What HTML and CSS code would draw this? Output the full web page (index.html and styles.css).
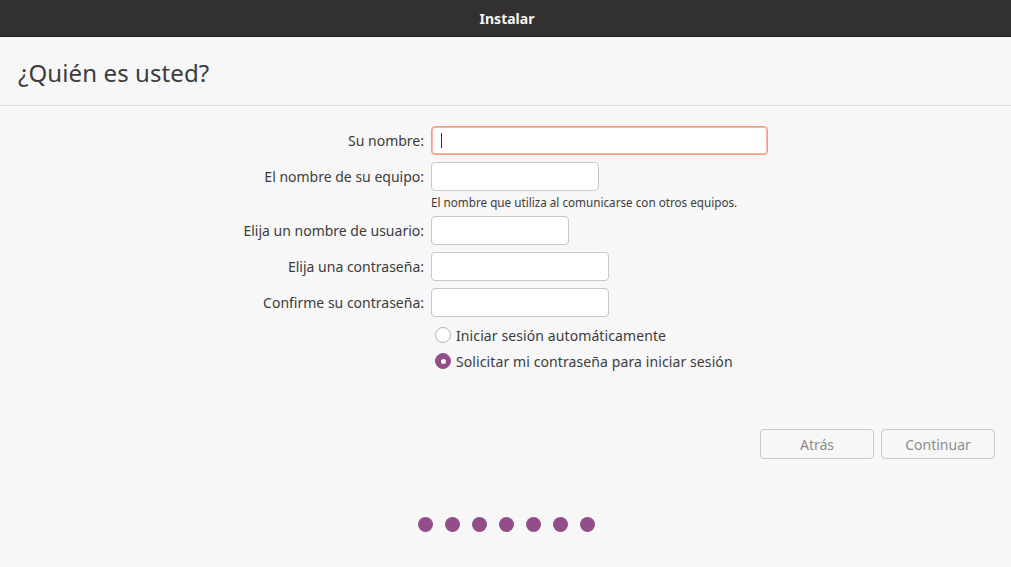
FILE: index.html
```html
<!DOCTYPE html>
<html lang="es">
<head>
<meta charset="utf-8">
<title>Instalar</title>
<link rel="stylesheet" href="styles.css">
</head>
<body>
<div class="window">
  <header class="titlebar"><span class="title">Instalar</span></header>
  <div class="pagehead"><h1 class="heading">¿Quién es usted?</h1></div>
  <main class="content">
    <div class="form">
      <label class="label">Su nombre:</label>
      <div class="field"><div class="entry entry-focus entry-w337"><span class="caret"></span></div></div>

      <label class="label">El nombre de su equipo:</label>
      <div class="field"><div class="entry entry-w167"></div></div>

      <span class="spacer"></span>
      <div class="hint">El nombre que utiliza al comunicarse con otros equipos.</div>

      <label class="label">Elija un nombre de usuario:</label>
      <div class="field"><div class="entry entry-w137"></div></div>

      <label class="label">Elija una contraseña:</label>
      <div class="field"><div class="entry entry-w177"></div></div>

      <label class="label">Confirme su contraseña:</label>
      <div class="field"><div class="entry entry-w177"></div></div>

      <span class="spacer"></span>
      <div class="radios">
        <div class="radio-row"><span class="radio"></span><span class="radio-text">Iniciar sesión automáticamente</span></div>
        <div class="radio-row"><span class="radio radio-on"></span><span class="radio-text">Solicitar mi contraseña para iniciar sesión</span></div>
      </div>
    </div>
    <div class="buttons">
      <div class="btn">Atrás</div>
      <div class="btn">Continuar</div>
    </div>
    <div class="dots">
      <span class="dot"></span><span class="dot"></span><span class="dot"></span><span class="dot"></span><span class="dot"></span><span class="dot"></span><span class="dot"></span>
    </div>
  </main>
</div>
</body>
</html>
```
FILE: styles.css
```css
* { box-sizing: border-box; }
html, body { margin: 0; padding: 0; }
body {
  width: 1011px;
  height: 567px;
  overflow: hidden;
  background: #f7f7f7;
  font-family: "Noto Sans", "Open Sans", sans-serif;
  color: #3c3c3c;
}
.window { display: flex; flex-direction: column; height: 567px; }
.titlebar {
  height: 37px;
  background: #323030;
  border-bottom: 1px solid #1c1b1b;
  display: flex;
  align-items: center;
  justify-content: center;
}
.title { color: #f4f4f4; font-weight: 700; font-size: 14px; padding-top: 1px; padding-left: 3px; }
.pagehead {
  height: 69px;
  border-bottom: 1px solid #dcdcdc;
  display: flex;
  align-items: center;
  padding-left: 18px;
}
.heading { margin: 0; font-weight: 400; font-size: 24px; color: #3c3c3c; padding-top: 3px; letter-spacing: 0.1px; }
.content { display: flex; flex-direction: column; }
.form {
  display: grid;
  grid-template-columns: 424px auto;
  column-gap: 7px;
  row-gap: 7px;
  padding-top: 20px;
}
.label {
  text-align: right;
  font-size: 14px;
  align-self: center;
  color: #3c3c3c;
}
.field { display: flex; }
.entry {
  height: 29px;
  background: #ffffff;
  border: 1px solid #cdc7c2;
  border-radius: 4px;
  display: flex;
  align-items: center;
  padding-left: 9px;
}
.entry-focus {
  border: 1px solid #ef9c7e;
  box-shadow: inset 0 0 0 1px #f6b8a0;
}
.entry-w337 { width: 337px; }
.entry-w167 { width: 168px; }
.entry-w137 { width: 138px; }
.entry-w177 { width: 178px; }
.caret { width: 1px; height: 15px; background: #2e2e2e; }
.hint { font-size: 11.7px; margin-top: -3px; margin-bottom: 0; line-height: 14px; }
.radios { display: flex; flex-direction: column; gap: 8px; margin-top: 2px; }
.radio-row { display: flex; align-items: center; gap: 5px; padding-left: 4px; font-size: 14px; height: 18px; }
.radio-text { letter-spacing: 0.1px; }
.radio {
  width: 16px; height: 16px; border-radius: 50%;
  background: #ffffff; border: 1px solid #b8b4b0;
  display: flex; align-items: center; justify-content: center;
}
.radio-on { background: #924d8b; border-color: #924d8b; }
.radio-on::after { content: ""; width: 5px; height: 5px; border-radius: 50%; background: #ffffff; }
.buttons {
  display: flex;
  justify-content: flex-end;
  gap: 7px;
  padding-right: 16px;
  margin-top: 59px;
}
.btn {
  width: 114px; height: 30px;
  border: 1px solid #cdc7c2;
  border-radius: 4px;
  background: #f7f7f7;
  color: #8b8e8f;
  font-size: 14px;
  display: flex; align-items: center; justify-content: center;
}
.dots { display: flex; justify-content: center; gap: 12px; margin-top: 58px; padding-left: 1px; }
.dot { width: 15px; height: 15px; border-radius: 50%; background: #924d8b; }
```
